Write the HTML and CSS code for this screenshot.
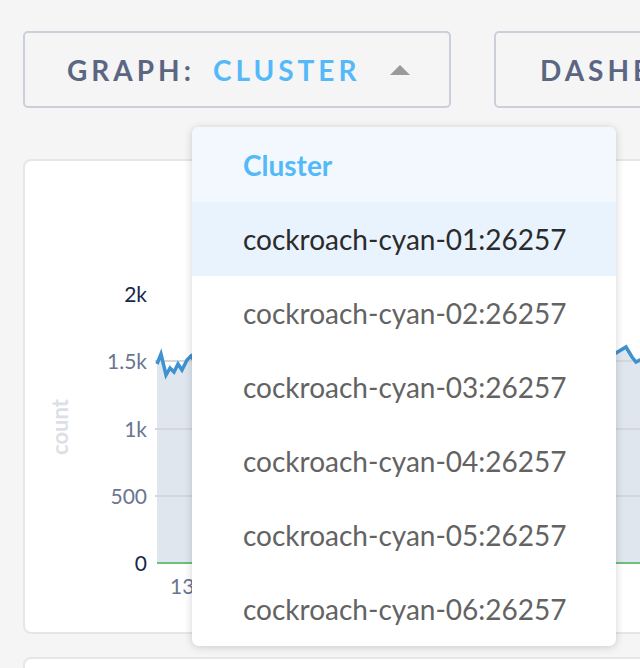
FILE: index.html
```html
<!DOCTYPE html>
<html>
<head>
<meta charset="utf-8">
<link rel="stylesheet" href="styles.css">
</head>
<body>
<div class="page">
  <div class="toolbar">
    <div class="selector sel-graph">
      <span class="sel-label">GRAPH:</span>
      <span class="sel-value">CLUSTER</span>
      <span class="caret"></span>
    </div>
    <div class="selector sel-dash">
      <span class="sel-label">DASHBOARD:</span>
      <span class="sel-value">OVERVIEW</span>
    </div>
  </div>

  <div class="card chart-card">
    <svg class="chart" width="700" height="475" viewBox="0 0 700 475">
      <text class="ylabel" x="45" y="268" transform="rotate(-90 45 268)" text-anchor="middle">count</text>
      <path class="area" d="M134 205 L138 195 L143 216 L147 209 L151 213 L155 205 L159 211 L164 201 L168 197 L593 194 L603 188 L609 198 L613 203 L617 201 L700 201 L700 404 L134 404 Z"/>
      <line class="grid" x1="132" y1="202" x2="700" y2="202"/>
      <line class="grid" x1="132" y1="270" x2="700" y2="270"/>
      <line class="grid" x1="132" y1="337" x2="700" y2="337"/>
      <line class="zero" x1="134" y1="404" x2="700" y2="404"/>
      <path class="line" d="M134 205 L138 195 L143 216 L147 209 L151 213 L155 205 L159 211 L164 201 L168 197 L172 203 L593 194 L603 188 L609 198 L613 203 L617 201 L700 199"/>
      <text class="tick dark" x="124" y="143" text-anchor="end">2k</text>
      <text class="tick" x="124" y="210" text-anchor="end">1.5k</text>
      <text class="tick" x="124" y="278" text-anchor="end">1k</text>
      <text class="tick" x="124" y="345" text-anchor="end">500</text>
      <text class="tick dark" x="124" y="412" text-anchor="end">0</text>
      <text class="tick" x="147" y="435">13</text>
    </svg>
  </div>
  <div class="card next-card"></div>

  <ul class="dropdown">
    <li class="dd-head">Cluster</li>
    <li class="dd-item active">cockroach-cyan-01:26257</li>
    <li class="dd-item">cockroach-cyan-02:26257</li>
    <li class="dd-item">cockroach-cyan-03:26257</li>
    <li class="dd-item">cockroach-cyan-04:26257</li>
    <li class="dd-item">cockroach-cyan-05:26257</li>
    <li class="dd-item">cockroach-cyan-06:26257</li>
  </ul>
</div>
</body>
</html>
```

FILE: styles.css
```css
html, body {
  margin: 0;
  padding: 0;
  background: #f5f5f5;
  overflow: hidden;
  width: 640px;
  height: 668px;
}
body {
  font-family: Lato, "Noto Sans", sans-serif;
}
.page {
  position: relative;
  padding: 31px 0 0 23px;
  width: 1000px;
}
.toolbar {
  display: flex;
  gap: 43px;
}
.selector {
  box-sizing: border-box;
  height: 77px;
  border: 2px solid #cacfd9;
  border-radius: 5px;
  display: flex;
  align-items: center;
  padding-left: 42px;
  font-size: 28px;
  font-weight: 700;
  letter-spacing: 4px;
  white-space: nowrap;
}
.sel-graph {
  width: 428px;
}
.sel-dash {
  width: 520px;
  padding-left: 44px;
}
.sel-label {
  color: #5b6682;
  margin-right: 18px;
}
.sel-value {
  color: #55b9f9;
}
.caret {
  width: 0;
  height: 0;
  border-left: 10px solid transparent;
  border-right: 10px solid transparent;
  border-bottom: 10px solid #9a9a9a;
  margin-left: 30px;
}
.card {
  box-sizing: border-box;
  background: #fff;
  border: 2px solid #e6e6e6;
  border-radius: 8px;
  width: 700px;
}
.chart-card {
  margin-top: 51px;
  height: 475px;
}
.chart {
  display: block;
  margin: -2px;
}
.next-card {
  margin-top: 23px;
  height: 60px;
}
.area {
  fill: #dfe6ee;
}
.grid {
  stroke: #d3d8df;
  stroke-width: 2;
}
.zero {
  stroke: #6cc17b;
  stroke-width: 2;
}
.line {
  fill: none;
  stroke: #3d92cf;
  stroke-width: 3.5;
  stroke-linejoin: miter;
}
.tick {
  font-family: Lato, sans-serif;
  font-size: 21px;
  fill: #6a7590;
}
.tick.dark {
  fill: #17264a;
}
.ylabel {
  font-family: Lato, sans-serif;
  font-size: 22px;
  font-weight: 700;
  fill: #dcdfe4;
}
.dropdown {
  position: absolute;
  left: 192px;
  top: 127px;
  width: 424px;
  margin: 0;
  padding: 0;
  list-style: none;
  background: #fff;
  border-radius: 7px;
  box-shadow: 0 1px 8px rgba(0, 0, 0, 0.18);
  overflow: hidden;
}
.dropdown li {
  height: 74px;
  display: flex;
  align-items: center;
  padding-left: 51px;
  font-size: 28px;
  white-space: nowrap;
}
.dd-head {
  height: 75px !important;
  background: #f3f8fe;
  color: #53b9f8;
  font-weight: 700;
}
.dd-item {
  color: #636363;
}
.dd-item.active {
  background: #e8f3fe;
  color: #2b2b2b;
}
```
